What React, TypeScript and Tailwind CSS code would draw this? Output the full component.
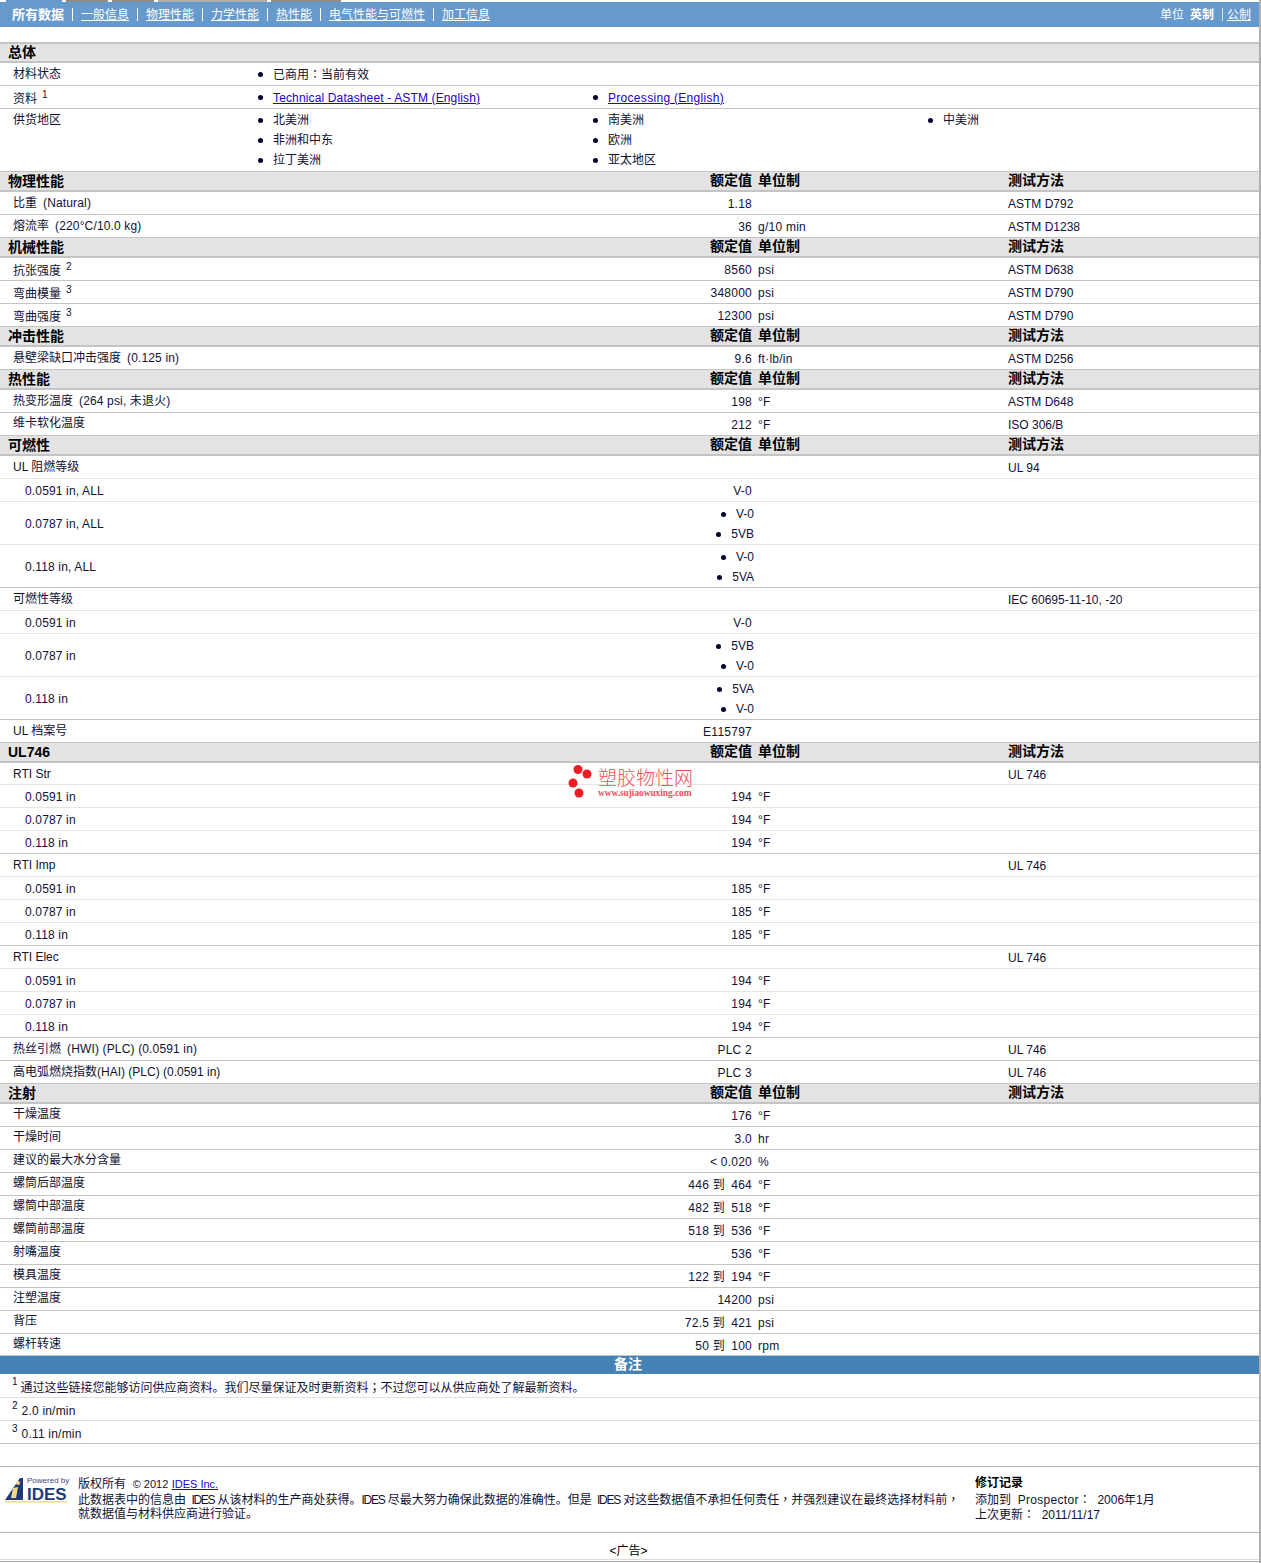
type Row = {
  label: string
  sup?: string
  note?: string
  value?: string
  unit?: string
  method?: string
  sub?: boolean
  light?: boolean
  lift?: boolean
  h?: number
  items?: string[]
}

type Section = { title: string; rows: Row[] }

const sections: Section[] = [
  {
    title: '物理性能',
    rows: [
      { label: '比重', note: '(Natural)', value: '1.18', method: 'ASTM D792' },
      { label: '熔流率', note: '(220°C/10.0 kg)', value: '36', unit: 'g/10 min', method: 'ASTM D1238' },
    ],
  },
  {
    title: '机械性能',
    rows: [
      { label: '抗张强度', sup: '2', value: '8560', unit: 'psi', method: 'ASTM D638' },
      { label: '弯曲模量', sup: '3', value: '348000', unit: 'psi', method: 'ASTM D790' },
      { label: '弯曲强度', sup: '3', value: '12300', unit: 'psi', method: 'ASTM D790' },
    ],
  },
  {
    title: '冲击性能',
    rows: [{ label: '悬壁梁缺口冲击强度', note: '(0.125 in)', value: '9.6', unit: 'ft·lb/in', method: 'ASTM D256' }],
  },
  {
    title: '热性能',
    rows: [
      { label: '热变形温度', note: '(264 psi, 未退火)', value: '198', unit: '°F', method: 'ASTM D648' },
      { label: '维卡软化温度', value: '212', unit: '°F', method: 'ISO 306/B', lift: true },
    ],
  },
  {
    title: '可燃性',
    rows: [
      { label: 'UL 阻燃等级', method: 'UL 94', light: true },
      { label: '0.0591 in, ALL', value: 'V-0', sub: true, light: true },
      { label: '0.0787 in, ALL', items: ['V-0', '5VB'], sub: true, light: true, h: 43 },
      { label: '0.118 in, ALL', items: ['V-0', '5VA'], sub: true, h: 43 },
      { label: '可燃性等级', method: 'IEC 60695-11-10, -20', light: true },
      { label: '0.0591 in', value: 'V-0', sub: true, light: true },
      { label: '0.0787 in', items: ['5VB', 'V-0'], sub: true, light: true, h: 43 },
      { label: '0.118 in', items: ['5VA', 'V-0'], sub: true, h: 43 },
      { label: 'UL 档案号', value: 'E115797' },
    ],
  },
  {
    title: 'UL746',
    rows: [
      { label: 'RTI Str', method: 'UL 746', light: true, h: 22 },
      { label: '0.0591 in', value: '194', unit: '°F', sub: true, light: true },
      { label: '0.0787 in', value: '194', unit: '°F', sub: true, light: true },
      { label: '0.118 in', value: '194', unit: '°F', sub: true },
      { label: 'RTI Imp', method: 'UL 746', light: true },
      { label: '0.0591 in', value: '185', unit: '°F', sub: true, light: true },
      { label: '0.0787 in', value: '185', unit: '°F', sub: true, light: true },
      { label: '0.118 in', value: '185', unit: '°F', sub: true },
      { label: 'RTI Elec', method: 'UL 746', light: true },
      { label: '0.0591 in', value: '194', unit: '°F', sub: true, light: true },
      { label: '0.0787 in', value: '194', unit: '°F', sub: true, light: true },
      { label: '0.118 in', value: '194', unit: '°F', sub: true },
      { label: '热丝引燃', note: '(HWI) (PLC) (0.0591 in)', value: 'PLC 2', method: 'UL 746' },
      { label: '高电弧燃烧指数(HAI) (PLC) (0.0591 in)', value: 'PLC 3', method: 'UL 746' },
    ],
  },
]

const injection: Row[] = [
  { label: '干燥温度', value: '176', unit: '°F', lift: true },
  { label: '干燥时间', value: '3.0', unit: 'hr', lift: true },
  { label: '建议的最大水分含量', value: '< 0.020', unit: '%', lift: true },
  { label: '螺筒后部温度', value: '446 到\u2002464', unit: '°F', lift: true },
  { label: '螺筒中部温度', value: '482 到\u2002518', unit: '°F', lift: true },
  { label: '螺筒前部温度', value: '518 到\u2002536', unit: '°F', lift: true },
  { label: '射嘴温度', value: '536', unit: '°F', lift: true },
  { label: '模具温度', value: '122 到\u2002194', unit: '°F', lift: true },
  { label: '注塑温度', value: '14200', unit: 'psi', lift: true },
  { label: '背压', value: '72.5 到\u2002421', unit: 'psi', lift: true },
  { label: '螺杆转速', value: '50 到\u2002100', unit: 'rpm', h: 22, lift: true },
]

const navLinks = ['一般信息', '物理性能', '力学性能', '热性能', '电气性能与可燃性', '加工信息']

function Dot() {
  return <span className="inline-block h-[5px] w-[5px] shrink-0 rounded-full bg-[#000033]" />
}

// centred punctuation, as in the reference's bitmap font
function Punct({ children }: { children: string }) {
  return <span className="font-['Noto_Sans_CJK_TC',sans-serif]">{children}</span>
}

function SectionHead({ title, columns = true, first = false }: { title: string; columns?: boolean; first?: boolean }) {
  return (
    <div
      className={`flex items-center border-b-2 border-[#c4c4c4] bg-[#e3e3e3] pl-2 text-[14px] font-bold leading-none text-black ${first ? 'h-[21px] border-t-2 pb-[2px]' : 'h-5'}`}
    >
      <div className="w-[652px] shrink-0">{title}</div>
      {columns && (
        <>
          <div className="w-[92px] shrink-0 pb-[2px] text-right">额定值</div>
          <div className="w-[256px] shrink-0 pb-[2px] pl-[6px]">单位制</div>
          <div className="pb-[2px]">测试方法</div>
        </>
      )}
    </div>
  )
}

function DataRow({ row }: { row: Row }) {
  const height = row.h ? (row.h === 43 ? 'h-[43px]' : 'h-[22px]') : 'h-[23px]'
  const labelPad = row.sub
    ? 'pl-[25px] pt-[2px] tracking-[0.15px]'
    : row.sup
      ? 'pl-[13px] pt-[4px]'
      : row.lift
        ? 'pl-[13px] pb-[2px]'
        : 'pl-[13px]'
  return (
    <div
      className={`flex border-b ${height} ${row.light ? 'border-[#e6e6e6]' : 'border-[#c4c4c4]'} items-center text-[12px] leading-none text-[#111133]`}
    >
      <div className={`w-[660px] shrink-0 whitespace-nowrap ${labelPad}`}>
        {row.label}
        {row.sup && <sup className="ml-[5px] text-[10px]">{row.sup}</sup>}
        {row.note && <span className="ml-[6px] tracking-[0.15px]">{row.note}</span>}
      </div>
      {row.items ? (
        <div className="flex w-[94px] shrink-0 flex-col items-end gap-[8px] pt-[2px]">
          {row.items.map((item) => (
            <div key={item} className="flex items-center gap-[10px]">
              <Dot />
              <span>{item}</span>
            </div>
          ))}
        </div>
      ) : (
        <div className="w-[92px] shrink-0 whitespace-pre pt-[2px] text-right tracking-[0.25px]">{row.value}</div>
      )}
      <div className={`w-[256px] shrink-0 pt-[2px] tracking-[0.25px] ${row.items ? 'pl-1' : 'pl-[6px]'}`}>{row.unit}</div>
      <div className="whitespace-nowrap pt-[2px]">{row.method}</div>
    </div>
  )
}

function ListCell({ children }: { children: React.ReactNode }) {
  return (
    <div className="flex h-5 items-center gap-[10px]">
      <Dot />
      <span>{children}</span>
    </div>
  )
}

function General() {
  return (
    <div className="text-[12px] leading-none text-[#111133]">
      <div className="flex h-[23px] items-center border-b border-[#c4c4c4]">
        <div className="w-[258px] shrink-0 pl-[13px]">材料状态</div>
        <ListCell>
          已商用<Punct>：</Punct>当前有效
        </ListCell>
      </div>
      <div className="flex h-[23px] items-center border-b border-[#c4c4c4]">
        <div className="w-[258px] shrink-0 pl-[13px] pt-[4px]">
          资料<sup className="ml-[5px] text-[10px]">1</sup>
        </div>
        <div className="w-[335px] shrink-0 pt-px">
          <ListCell>
            <a className="tracking-[0.14px] text-[#2200cc] underline">Technical Datasheet - ASTM (English)</a>
          </ListCell>
        </div>
        <div className="pt-px">
          <ListCell>
            <a className="tracking-[0.3px] text-[#2200cc] underline">Processing (English)</a>
          </ListCell>
        </div>
      </div>
      <div className="flex h-[63px] border-b border-[#c4c4c4] pt-px">
        <div className="w-[258px] shrink-0 pl-[13px] pt-1">供货地区</div>
        <div className="w-[335px] shrink-0">
          <ListCell>北美洲</ListCell>
          <ListCell>非洲和中东</ListCell>
          <ListCell>拉丁美洲</ListCell>
        </div>
        <div className="w-[335px] shrink-0">
          <ListCell>南美洲</ListCell>
          <ListCell>欧洲</ListCell>
          <ListCell>亚太地区</ListCell>
        </div>
        <ListCell>中美洲</ListCell>
      </div>
    </div>
  )
}

function Watermark() {
  return (
    <div className="absolute left-[568px] top-[765px] flex items-start gap-[6px]">
      <svg width="24" height="33" viewBox="0 0 24 33">
        <circle cx="10" cy="4.5" r="4.5" fill="#ee1c25" />
        <circle cx="19" cy="9" r="4.5" fill="#ee1c25" />
        <circle cx="5" cy="18" r="4.5" fill="#ee1c25" />
        <circle cx="11" cy="28" r="4.5" fill="#ee1c25" />
      </svg>
      <div className="pt-[4px] leading-none text-[#f0505a]">
        <div className="text-[19px] font-light leading-[20px]">塑胶物性网</div>
        <div className="font-['Liberation_Serif',serif] text-[9.3px] font-bold leading-[9px]">www.sujiaowuxing.com</div>
      </div>
    </div>
  )
}

function IdesLogo() {
  return (
    <div className="relative h-[27px] w-[63px] shrink-0">
      <svg className="absolute left-0 top-0" width="63" height="27" viewBox="0 0 63 27">
        <path d="M0 23 L15 1 L18 1 L18 23 Z" fill="#1f3a7a" />
        <path d="M8 11 L13 10 L11 21 L6 21 Z" fill="#f4d98a" />
        <circle cx="13" cy="6" r="2" fill="#f4d98a" />
        <rect x="0" y="24" width="62" height="1.5" fill="#f4d98a" />
      </svg>
      <div className="absolute left-[22px] top-0 whitespace-nowrap text-[8px] leading-none text-[#3c4a7c]">Powered by</div>
      <div className="absolute left-[22px] top-[9px] text-[17px] font-bold leading-none text-[#1f3a7a]">IDES</div>
    </div>
  )
}

export default function App() {
  return (
    <div className="relative h-[1563px] w-[1261px] overflow-hidden border-r-2 border-[#b0b0b0] bg-white font-['Liberation_Sans','Noto_Sans_CJK_SC',sans-serif]">
      <div className="flex h-[2px] gap-[4px] pl-[6px]">
        <div className="w-[56px] bg-[#6699cc]" />
        <div className="w-[42px] bg-[#8c8c8c]" />
        <div className="w-[42px] bg-[#8c8c8c]" />
        <div className="w-[109px] bg-[#b0b0b0]" />
        <div className="w-[70px] bg-[#8c8c8c]" />
      </div>
      <nav className="flex h-[25px] items-center justify-between bg-[#6699cc] pl-3 pr-[8px] text-[12px] leading-none text-white">
        <div className="flex items-center">
          <b className="text-[13px]">所有数据</b>
          {navLinks.map((link) => (
            <span key={link} className="flex items-center">
              <span className="mx-2 h-[13px] w-px bg-white" />
              <a className="underline">{link}</a>
            </span>
          ))}
        </div>
        <div className="flex items-center">
          <span>单位</span>
          <b className="ml-[6px]">英制</b>
          <span className="ml-[8px] mr-[4px] h-[13px] w-px bg-white/70" />
          <a className="underline">公制</a>
        </div>
      </nav>

      <div className="h-[15px]" />

      <SectionHead title="总体" columns={false} first />
      <General />

      {sections.map((section) => (
        <div key={section.title}>
          <SectionHead title={section.title} />
          {section.rows.map((row, i) => (
            <DataRow key={i} row={row} />
          ))}
        </div>
      ))}

      <SectionHead title="注射" />
      {injection.map((row) => (
        <DataRow key={row.label} row={row} />
      ))}

      <div className="flex h-[18px] items-center justify-center bg-[#4682b4] pb-[2px] pr-[3px] text-[14px] font-bold leading-none text-white">备注</div>
      <div className="mt-px text-[12px] leading-none text-[#111133]">
        <div className="flex h-[23px] items-center border-b border-[#e0e0e0] pl-3 pt-[2px]">
          <sup className="mr-[3px] text-[10px]">1</sup>
          <span>
            通过这些链接您能够访问供应商资料。我们尽量保证及时更新资料<Punct>；</Punct>不过您可以从供应商处了解最新资料。
          </span>
        </div>
        <div className="flex h-[23px] items-center border-b border-[#e0e0e0] pl-3 pt-1">
          <sup className="mr-1 text-[10px]">2</sup>
          <span className="tracking-[0.2px]">2.0 in/min</span>
        </div>
        <div className="flex h-[23px] items-center border-b border-[#c4c4c4] pl-3 pt-1">
          <sup className="mr-1 text-[10px]">3</sup>
          <span className="tracking-[0.2px]">0.11 in/min</span>
        </div>
      </div>
      <div className="h-[23px] border-b border-[#b4b4b4]" />

      <footer className="flex h-[66px] border-b border-[#b4b0b8] pl-[5px] pt-[10px] text-[12px] leading-[15px] text-[#111133]">
        <IdesLogo />
        <div className="ml-[10px] w-[897px] shrink-0">
          <div className="h-[15px]">
            版权所有&nbsp; <span className="text-[11px]">© 2012</span>{' '}
            <a className="text-[11px] text-[#2200cc] underline">IDES Inc.</a>
          </div>
          <div className="-mt-px h-[14px] whitespace-nowrap">
            此数据表中的信息由 <span className="tracking-[-1.3px]">&nbsp;IDES</span> 从该材料的生产商处获得。<span className="tracking-[-1.3px]">IDES</span>{' '}
            尽最大努力确保此数据的准确性。但是 <span className="tracking-[-1.3px]">&nbsp;IDES</span> 对这些数据值不承担任何责任<Punct>，</Punct>
            并强烈建议在最终选择材料前<Punct>，</Punct>
          </div>
          <div className="mt-[2px]">就数据值与材料供应商进行验证。</div>
        </div>
        <div className="-mt-px">
          <b className="block h-[15px] text-black">修订记录</b>
          <div className="h-[15px]">
            添加到&nbsp; <span className="tracking-[0.3px]">Prospector</span>
            <Punct>：</Punct>&nbsp; 2006年1月
          </div>
          <div className="h-[15px]">
            上次更新<Punct>：</Punct>&nbsp; 2011/11/17
          </div>
        </div>
      </footer>

      <div className="flex h-[27px] items-end justify-center border-b border-[#dcdcdc] pb-[2px] pr-[2px] text-[12px] leading-none text-black">
        &lt;广告&gt;
      </div>
      <div className="mt-px h-px bg-[#a8a8a8]" />

      <Watermark />
    </div>
  )
}
